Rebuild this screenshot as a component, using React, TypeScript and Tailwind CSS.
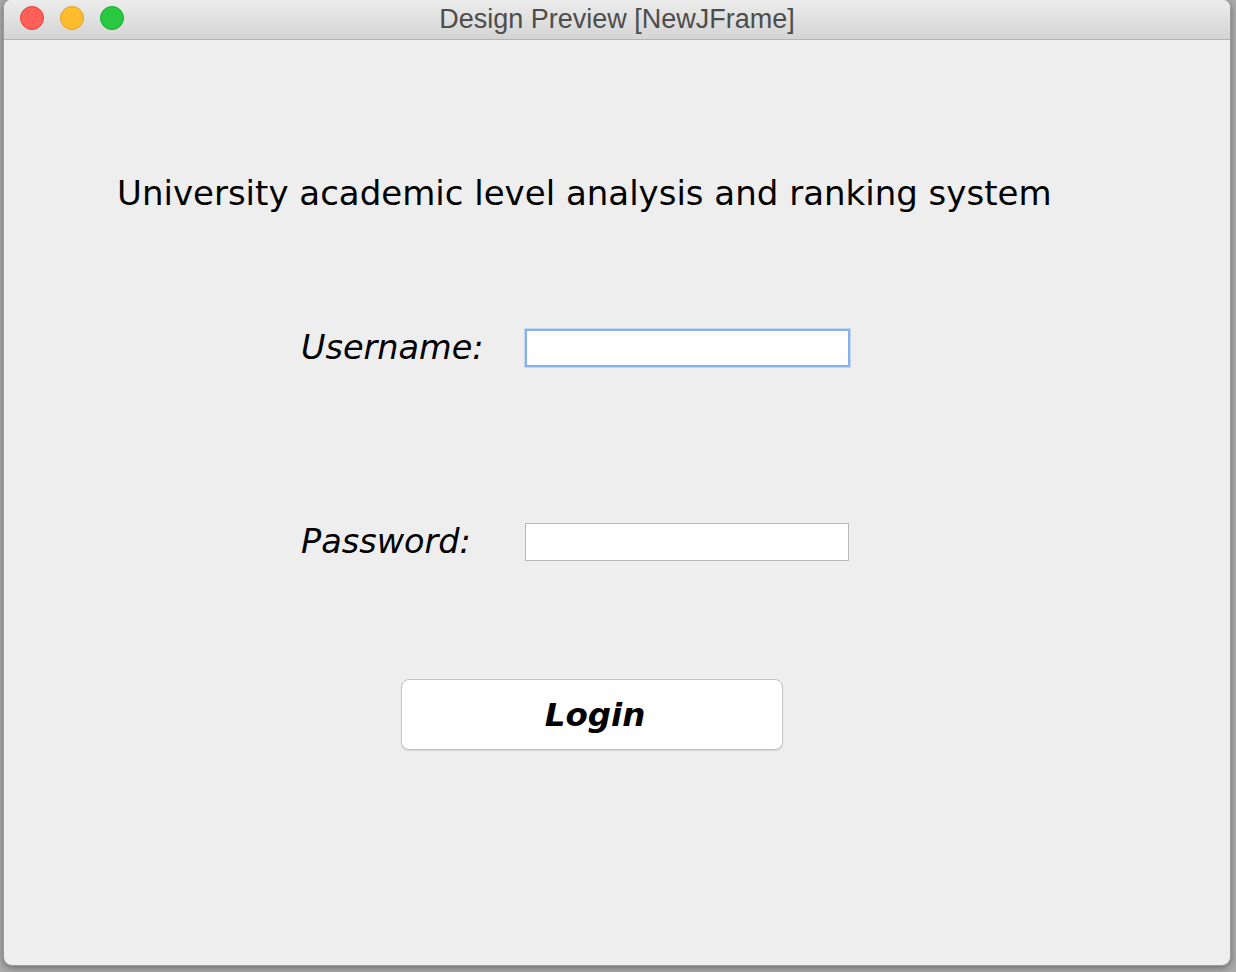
import React from "react";

export default function App() {
  return (
    <div className="w-[1236px] h-[972px] bg-[#a9a9a9] pl-[3px] overflow-hidden">
      <div className="w-[1228px] h-[966px] bg-[#eeeeee] border-x border-b border-[#9a9a9a] rounded-t-[8px] rounded-b-[9px] shadow-[0_2px_6px_rgba(0,0,0,0.35)] flex flex-col overflow-hidden">
        {/* Title bar */}
        <div className="relative h-[40px] shrink-0 bg-gradient-to-b from-[#ececec] to-[#d4d4d4] border-b border-[#b4b4b4] flex items-center justify-center">
          <div className="absolute left-[16px] top-[6px] flex gap-[16px]">
            <span className="w-[24px] h-[24px] rounded-full bg-[#fe5f57] border border-[#e0443e]" />
            <span className="w-[24px] h-[24px] rounded-full bg-[#febc2e] border border-[#dea123]" />
            <span className="w-[24px] h-[24px] rounded-full bg-[#28c840] border border-[#1aab29]" />
          </div>
          <span className="text-[27px] leading-[30px] text-[#4d4d4d] font-['Liberation_Sans',Arial,sans-serif] mt-[-2px]">
            Design Preview [NewJFrame]
          </span>
        </div>

        {/* Content */}
        <div className="flex flex-col font-['DejaVu_Sans',Verdana,sans-serif] text-black">
          <div className="pt-[133px] pl-[113px] text-[34px] leading-[40px]">
            University academic level analysis and ranking system
          </div>

          <div className="mt-[116px] flex items-center h-[38px]">
            <div className="ml-[297px] w-[224px] italic text-[33.5px] leading-[38px]">Username:</div>
            <div className="w-[325px] h-[38px] bg-white border-2 border-[#85b2ee] shadow-[0_0_0_1px_rgba(133,178,238,0.4)]" />
          </div>

          <div className="mt-[156px] flex items-center h-[38px]">
            <div className="ml-[297px] w-[224px] italic text-[33.5px] leading-[38px]">Password:</div>
            <div className="w-[324px] h-[38px] bg-white border border-[#b9b9b9]" />
          </div>

          <div className="mt-[118px] ml-[397px]">
            <button className="w-[382px] h-[71px] bg-white border border-[#c4c4c4] rounded-[8px] shadow-[0_1px_1px_rgba(0,0,0,0.12)] flex items-center justify-center">
              <span className="font-bold italic text-[32.5px] leading-[40px] pl-[6px]">Login</span>
            </button>
          </div>
        </div>
      </div>
    </div>
  );
}
